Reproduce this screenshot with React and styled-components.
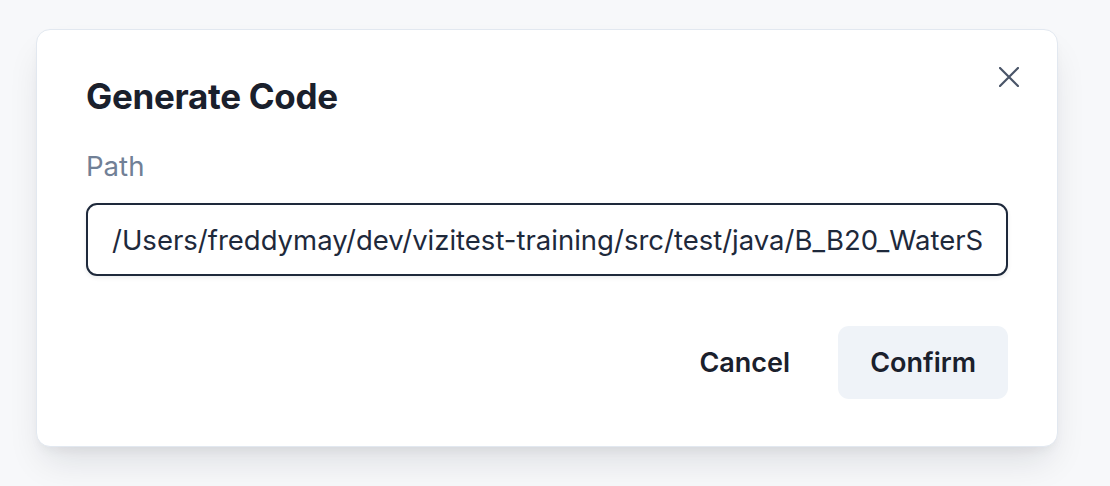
import React, { useState } from 'react';
import styled, { createGlobalStyle } from 'styled-components';

const GlobalStyle = createGlobalStyle`
  * {
    box-sizing: border-box;
  }

  body {
    margin: 0;
    background-color: #f7f8fa;
    font-family: Inter, "Noto Sans", sans-serif;
    color: #1a202c;
  }
`;

const Page = styled.div`
  min-height: 486px;
  padding: 29px 0 0 36px;
`;

const Modal = styled.section`
  position: relative;
  width: 1022px;
  padding: 45px 49px 47px 49px;
  background: #ffffff;
  border: 1px solid #e2e8f0;
  border-radius: 14px;
  box-shadow: 0 20px 36px -8px rgba(15, 23, 42, 0.12), 0 6px 12px -4px rgba(15, 23, 42, 0.06);
`;

const Title = styled.h2`
  margin: 0;
  font-size: 35px;
  line-height: 42px;
  font-weight: 700;
  color: #1a202c;
  letter-spacing: -0.3px;
`;

const CloseButton = styled.button`
  position: absolute;
  top: 27px;
  right: 28px;
  width: 40px;
  height: 40px;
  display: flex;
  align-items: center;
  justify-content: center;
  padding: 0;
  border: none;
  border-radius: 8px;
  background: transparent;
  color: #4a5568;
  cursor: pointer;
`;

const Field = styled.div`
  display: flex;
  flex-direction: column;
  margin-top: 32px;
`;

const Label = styled.label`
  font-size: 27.6px;
  line-height: 34px;
  font-weight: 400;
  color: #718096;
  margin-bottom: 20px;
`;

const Input = styled.input`
  width: 100%;
  height: 73px;
  padding: 0 24px;
  border: 2px solid #1e293b;
  border-radius: 11px;
  font-family: Inter, "Noto Sans", sans-serif;
  font-size: 27.5px;
  color: #1e293b;
  background: #ffffff;
  outline: none;
  box-shadow: 0 2px 4px rgba(15, 23, 42, 0.08);
`;

const Footer = styled.div`
  display: flex;
  justify-content: flex-end;
  gap: 16px;
  margin-top: 50px;
`;

const Button = styled.button`
  height: 73px;
  padding: 0 32px;
  border: none;
  border-radius: 11px;
  font-family: Inter, "Noto Sans", sans-serif;
  font-size: 27px;
  font-weight: 600;
  color: #1a202c;
  background: ${props => props.primary ? '#eff3f8' : 'transparent'};
  cursor: pointer;
`;

function CloseIcon() {
  return (
    <svg width="20" height="20" viewBox="0 0 20 20" fill="none">
      <path d="M1 1L19 19M19 1L1 19" stroke="currentColor" strokeWidth="2.2" strokeLinecap="round" />
    </svg>
  );
}

export default function App() {
  const [path, setPath] = useState('/Users/freddymay/dev/vizitest-training/src/test/java/B_B20_WaterSupplyTest.java');

  return (
    <Page>
      <GlobalStyle />
      <Modal>
        <Title>Generate Code</Title>
        <CloseButton aria-label="Close">
          <CloseIcon />
        </CloseButton>
        <Field>
          <Label htmlFor="path">Path</Label>
          <Input id="path" value={path} onChange={e => setPath(e.target.value)} />
        </Field>
        <Footer>
          <Button>Cancel</Button>
          <Button primary>Confirm</Button>
        </Footer>
      </Modal>
    </Page>
  );
}
